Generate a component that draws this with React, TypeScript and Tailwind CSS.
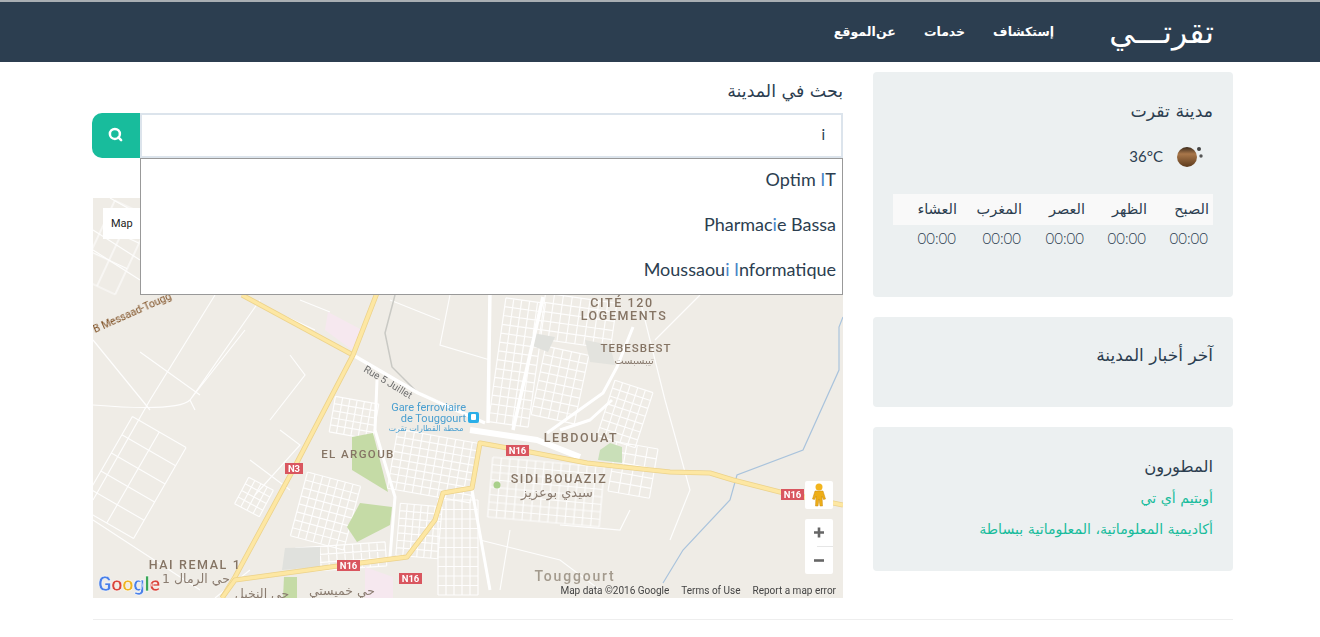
import { Search } from 'lucide-react'

const arabic = 'font-["DejaVu_Sans",sans-serif]'

const prayers = [
  { name: 'الصبح', width: 'w-[62px]' },
  { name: 'الظهر', width: 'w-[62px]' },
  { name: 'العصر', width: 'w-[63px]' },
  { name: 'المغرب', width: 'w-[65px]' },
  { name: 'العشاء', width: 'w-[68px]' },
]

function lineGrid(x: number, y: number, w: number, h: number, cols: number, rows: number, angle: number) {
  const lines = []
  for (let i = 0; i <= cols; i++) {
    const px = x + (w / cols) * i
    lines.push(`M${px} ${y}V${y + h}`)
  }
  for (let i = 0; i <= rows; i++) {
    const py = y + (h / rows) * i
    lines.push(`M${x} ${py}H${x + w}`)
  }
  return <path d={lines.join('')} transform={`rotate(${angle} ${x + w / 2} ${y + h / 2})`} />
}

function RoadShield({ x, y, label, w = 23 }: { x: number; y: number; label: string; w?: number }) {
  return (
    <g>
      <rect x={x} y={y} width={w} height={11} fill="#d9565f" />
      <text x={x + w / 2} y={y + 9} textAnchor="middle" fontSize="9.5" fontWeight="700" fill="#fff" fontFamily="Roboto, sans-serif">
        {label}
      </text>
    </g>
  )
}

function MapLabel({ x, y, children, size = 12.5, spacing = 1.6, color = '#857464' }: { x: number; y: number; children: string; size?: number; spacing?: number; color?: string }) {
  return (
    <text x={x} y={y} textAnchor="middle" fontSize={size} letterSpacing={spacing} fontWeight="500" fill={color} fontFamily="Roboto, sans-serif">
      {children}
    </text>
  )
}

function ArabicLabel({ x, y, children, size = 12, color = '#8a7c70' }: { x: number; y: number; children: string; size?: number; color?: string }) {
  return (
    <text x={x} y={y} textAnchor="middle" fontSize={size} fill={color} fontFamily="DejaVu Sans, sans-serif">
      {children}
    </text>
  )
}

const n16 = 'M222 598L235 580L345 565L407 557L435 520L443 493L472 488L480 443L530 452L587 463L670 472L710 473L733 480L780 492L843 505'
const n3 = 'M382 280L353 355L293 470L235 577L222 598'

function MapDrawing() {
  return (
    <svg viewBox="93 198 750 400" className="block h-full w-full">
      <rect x="93" y="198" width="750" height="400" fill="#efece6" />

      {/* thin streets */}
      <g stroke="#fff" strokeWidth="1.2" fill="none" opacity="0.9">
        {lineGrid(102, 425, 62, 105, 2, 5, 30)}
        {lineGrid(95, 205, 40, 85, 2, 3, 25)}
        {lineGrid(240, 482, 28, 30, 4, 4, 28)}
        {lineGrid(298, 478, 55, 66, 7, 8, 15)}
        {lineGrid(296, 545, 90, 24, 11, 3, -4)}
        {lineGrid(332, 400, 44, 36, 6, 5, 10)}
        {lineGrid(392, 436, 84, 60, 10, 8, 10)}
        {lineGrid(398, 505, 42, 52, 6, 7, 5)}
        {lineGrid(438, 500, 40, 95, 5, 10, 0)}
        {lineGrid(490, 462, 112, 60, 13, 8, 5)}
        {lineGrid(497, 300, 40, 125, 5, 14, 8)}
        {lineGrid(542, 298, 72, 46, 8, 5, 8)}
        {lineGrid(538, 350, 44, 70, 5, 8, 12)}
        {lineGrid(605, 385, 40, 58, 5, 7, 18)}
        {lineGrid(612, 445, 42, 50, 4, 5, 10)}
        <path d="M93 405C130 408 180 410 190 400L260 300M93 340L150 410M140 352L200 395M245 330L190 400L195 410M93 520L200 590M250 570L215 598" />
        <path d="M215 295L150 400L93 500M290 355L305 375L270 420M280 430L300 445L255 495M250 460L290 490M315 330L250 300M300 300L330 312" />
        <path d="M640 300L665 400L690 490L670 540M700 295L655 340M480 540L560 560L600 590M390 300L440 320M450 295L440 345L490 360" />
        <path d="M630 510L620 530L560 525M500 590L510 530M93 250L140 280M110 198L140 215M93 230L140 260" />
      </g>

      {/* parks and blocks */}
      <path d="M352 437L373 433L388 492L352 470Z" fill="#c5dba6" />
      <path d="M360 503L392 507L390 525L357 542L347 527Z" fill="#c5dba6" />
      <path d="M600 450L610 443L622 447L622 463L598 460Z" fill="#c9dfb8" />
      <path d="M284 577H297V598H283Z" fill="#c5dba6" />
      <circle cx="497" cy="485" r="3.500" fill="#a9d08a" />
      <path d="M328 312L362 330L352 350L325 330Z" fill="#f6e8ef" />
      <path d="M365 567L393 577V598H365Z" fill="#f6e8ef" />
      <path d="M285 548L320 547V567L282 570Z" fill="#e0e1dd" />
      <path d="M533 333L555 337L548 352L530 345Z" fill="#e0e1dd" />
      <path d="M585 340L610 345L615 365L590 362Z" fill="#e3e3de" />

      {/* railway */}
      <path d="M395 295L385 333L392 367L418 393L452 407" stroke="#c9c9c4" strokeWidth="1.500" fill="none" />

      {/* wide white roads */}
      <g stroke="#fff" fill="none" strokeLinejoin="round">
        <path d="M353 355L418 393L485 423" strokeWidth="3.500" />
        <path d="M377 380L375 430L395 497L390 557" strokeWidth="3" />
        <path d="M470 430L537 440L580 457" strokeWidth="6" />
        <path d="M547 433L603 393L617 367L633 327" strokeWidth="3" />
        <path d="M490 290L488 423M543 297L513 430" strokeWidth="3.500" />
        <path d="M472 490L490 590" strokeWidth="3" />
        <path d="M612 400L590 420L560 430" strokeWidth="3" />
      </g>

      {/* river */}
      <path d="M843 317L839 327L839 370L803 450L737 475L730 500L683 550L663 583" stroke="#a9c3dc" strokeWidth="1.200" fill="none" />

      {/* highways */}
      <g fill="none" strokeLinejoin="round">
        <path d="M242 295L353 355" stroke="#ecd28a" strokeWidth="5" />
        <path d="M242 295L353 355" stroke="#fde7a3" strokeWidth="3.500" />
        <path d={n3} stroke="#ecd28a" strokeWidth="5" />
        <path d={n3} stroke="#fde7a3" strokeWidth="3.500" />
        <path d={n16} stroke="#ecd28a" strokeWidth="5" />
        <path d={n16} stroke="#fde7a3" strokeWidth="3.500" />
      </g>

      <RoadShield x={285} y={463} label="N3" w={18} />
      <RoadShield x={337} y={560} label="N16" />
      <RoadShield x={399} y={573} label="N16" />
      <RoadShield x={506} y={445} label="N16" />
      <RoadShield x={781} y={489} label="N16" />

      <MapLabel x={622} y={307}>CITÉ 120</MapLabel>
      <MapLabel x={624} y={320}>LOGEMENTS</MapLabel>
      <MapLabel x={636} y={352} size={11.5} spacing={1}>TEBESBEST</MapLabel>
      <ArabicLabel x={634} y={364} size={10}>تيبسبست</ArabicLabel>
      <MapLabel x={581} y={442}>LEBDOUAT</MapLabel>
      <MapLabel x={358} y={458} size={11.5} spacing={1.4}>EL ARGOUB</MapLabel>
      <MapLabel x={559} y={483}>SIDI BOUAZIZ</MapLabel>
      <ArabicLabel x={557} y={497} size={13}>سيدي بوعزيز</ArabicLabel>
      <MapLabel x={195} y={569}>HAI REMAL 1</MapLabel>
      <ArabicLabel x={196} y={583} size={12.500}>حي الرمال 1</ArabicLabel>
      <ArabicLabel x={262} y={598} size={12.500}>حي النخيل</ArabicLabel>
      <ArabicLabel x={342} y={595} size={12.500}>حي خميستي</ArabicLabel>
      <MapLabel x={575} y={581} size={14} spacing={1.800} color="#a39a8d">Touggourt</MapLabel>

      <g fill="#4a9fd0" fontFamily="Roboto, sans-serif" fontSize="11">
        <text x={466} y={411} textAnchor="end">Gare ferroviaire</text>
        <text x={466} y={422} textAnchor="end">de Touggourt</text>
      </g>
      <rect x="468" y="412" width="11" height="11" rx="2" fill="#29aee8" />
      <rect x="471" y="414" width="5" height="6" rx="1" fill="#fff" />
      <ArabicLabel x={426} y={431} size={8} color="#4a9fd0">محطة القطارات تقرت</ArabicLabel>

      <text x={95} y={333} transform="rotate(-24 95 333)" fontSize="10.500" fill="#7b4b1e" fontFamily="Roboto, sans-serif">
        B Messaad-Tougg
      </text>
      <text x={363} y={371} transform="rotate(31 363 371)" fontSize="10" fill="#6d6d6d" fontFamily="Roboto, sans-serif">
        Rue 5 Juillet
      </text>

      {/* google logo */}
      <text x={98} y={591} fontSize="20" fontWeight="700" fontFamily="Roboto, sans-serif" stroke="#fff" strokeWidth="0.500" letterSpacing="-0.300">
        <tspan fill="#4a80e8">G</tspan>
        <tspan fill="#d9443a">o</tspan>
        <tspan fill="#eeb422">o</tspan>
        <tspan fill="#4a80e8">g</tspan>
        <tspan fill="#3ba757">l</tspan>
        <tspan fill="#d9443a">e</tspan>
      </text>
    </svg>
  )
}

function GoogleMap() {
  return (
    <div className="relative mt-[40px] h-[400px] w-[750px] overflow-hidden">
      <MapDrawing />
      <div className="absolute left-[10px] top-[10px] flex h-[31px] w-[60px] items-center bg-white pl-[8px] pt-px font-['Roboto',sans-serif] text-[11px] text-[#222]">
        Map
      </div>
      <div className="absolute left-[712px] top-[283px] flex h-[28px] w-[28px] items-center justify-center rounded-[2px] bg-white">
        <svg width="14" height="24" viewBox="0 0 14 24">
          <circle cx="7" cy="4" r="3.500" fill="#f2b51e" />
          <path d="M3 8h8l2.500 8-2 .5L10 13l.5 10H8l-1-7-1 7H3.500L4 13l-1.500 3.500-2-.5z" fill="#eeae17" stroke="#c88a10" strokeWidth="0.500" />
        </svg>
      </div>
      <div className="absolute left-[712px] top-[321px] flex w-[28px] flex-col items-center rounded-[2px] bg-white text-[#666]">
        <svg width="28" height="27" viewBox="0 0 28 27">
          <path d="M14 8.500v10M9 13.500h10" stroke="#666" strokeWidth="2.600" />
        </svg>
        <div className="ml-auto h-px w-[16px] bg-[#e6e6e6]" />
        <svg width="28" height="27" viewBox="0 0 28 27">
          <path d="M9 13.500h10" stroke="#666" strokeWidth="2.600" />
        </svg>
      </div>
      <div className="absolute bottom-px right-[7px] flex gap-[12px] font-['Roboto',sans-serif] text-[10px] leading-[12px] text-[#444]">
        <span>Map data ©2016 Google</span>
        <span>Terms of Use</span>
        <span>Report a map error</span>
      </div>
    </div>
  )
}

function SearchColumn() {
  return (
    <div className="relative w-[750px]">
      <h2 dir="rtl" className={`${arabic} pt-[18px] text-[17.400px] leading-[22px] text-[#2c3e50]`}>
        بحث في المدينة
      </h2>
      <div className="-ml-px mt-[11px] flex h-[45px] w-[751px]">
        <button className="flex h-full w-[48px] items-center justify-center rounded-l-[10px] bg-[#18bc9c] pb-[2px] pr-px text-white">
          <Search size={15} strokeWidth={4} />
        </button>
        <div className="flex h-full w-[703px] items-center justify-end border-2 border-[#dce4ec] bg-white pb-[2px] pr-[16px] font-['Lato',sans-serif] text-[15px] text-[#2c3e50]">
          i
        </div>
      </div>
      <ul className="absolute left-[47px] top-[96px] z-10 h-[137px] w-[703px] border border-[#999] bg-white px-[6px] text-right font-['Lato',sans-serif] text-[18px] leading-[41px] text-[#2c3e50]">
        <li className="h-[45px]">
          Opt<b className="font-normal text-[#4a86c8]">i</b>m <b className="font-normal text-[#4a86c8]">I</b>T
        </li>
        <li className="h-[45px]">
          Pharmac<b className="font-normal text-[#4a86c8]">i</b>e Bassa
        </li>
        <li className="h-[45px]">
          Moussaou<b className="font-normal text-[#4a86c8]">i</b> <b className="font-normal text-[#4a86c8]">I</b>nformat<b className="font-normal text-[#4a86c8]">i</b>que
        </li>
      </ul>
      <GoogleMap />
    </div>
  )
}

function WeatherCard() {
  return (
    <section dir="rtl" className="h-[225px] rounded-[4px] bg-[#ecf0f1] px-[20px] pt-[28px]">
      <h3 className={`${arabic} text-[17.300px] leading-[22px] text-[#2c3e50]`}>مدينة تقرت</h3>
      <div className="mt-[21px] flex h-[26px] items-center">
        <svg width="30" height="24" viewBox="0 0 30 24" className="mr-[8px] shrink-0">
          <defs>
            <linearGradient id="moon" x1="0" y1="0" x2="0" y2="1">
              <stop offset="0" stopColor="#3b2a1c" />
              <stop offset="0.350" stopColor="#a9774a" />
              <stop offset="1" stopColor="#5c3a1c" />
            </linearGradient>
          </defs>
          <circle cx="12" cy="13" r="10" fill="url(#moon)" />
          <circle cx="24" cy="5" r="2" fill="#444" />
          <circle cx="26" cy="12" r="1.700" fill="#555" />
        </svg>
        <span dir="ltr" className="mr-[12px] font-['Lato',sans-serif] text-[15px] text-[#2c3e50]">
          36°C
        </span>
      </div>
      <table className="mt-[25px] w-[320px] table-fixed border-collapse text-[#2c3e50]">
        <tbody>
          <tr className="h-[31px] bg-[#f9f9f9]">
            {prayers.map((p) => (
              <td key={p.name} className={`${p.width} ${arabic} pr-[4px] text-[14.500px]`}>
                {p.name}
              </td>
            ))}
          </tr>
          <tr className="h-[27px]">
            {prayers.map((p) => (
              <td key={p.name} className="pr-[5px] font-['Lato',sans-serif] text-[15px] font-light">
                00:00
              </td>
            ))}
          </tr>
        </tbody>
      </table>
    </section>
  )
}

function Sidebar() {
  return (
    <aside className="flex w-[360px] flex-col gap-[20px] pt-[10px]">
      <WeatherCard />
      <section dir="rtl" className="h-[90px] rounded-[4px] bg-[#ecf0f1] px-[20px] pt-[26px]">
        <h3 className={`${arabic} text-[17px] leading-[24px] text-[#2c3e50]`}>آخر أخبار المدينة</h3>
      </section>
      <section dir="rtl" className="h-[144px] rounded-[4px] bg-[#ecf0f1] px-[20px] pt-[28px]">
        <h3 className={`${arabic} text-[16.400px] leading-[24px] text-[#2c3e50]`}>المطورون</h3>
        <a className={`${arabic} mt-[9px] block text-[14.200px] leading-[20px] text-[#18bc9c]`}>أوبتيم أي تي</a>
        <a className={`${arabic} mt-[11px] block text-[14.200px] leading-[20px] text-[#18bc9c]`}>أكاديمية المعلوماتية، المعلوماتية ببساطة</a>
      </section>
    </aside>
  )
}

export default function App() {
  return (
    <div className="h-[637px] w-[1320px] overflow-hidden bg-white">
      <header dir="rtl" className={`${arabic} flex h-[62px] items-center border-t-2 border-[#a9aeb3] bg-[#2c3e50] pr-[106px] text-white`}>
        <span className="w-[104px] whitespace-nowrap text-[31.500px] leading-[60px]">تقرتـــي</span>
        <nav className="mr-[56px] flex gap-[28px] text-[12.500px] font-bold">
          <a>إستكشاف</a>
          <a>خدمات</a>
          <a className="[word-spacing:-4px]">عن الموقع</a>
        </nav>
      </header>
      <main className="ml-[93px] flex w-[1140px] gap-[30px]">
        <SearchColumn />
        <Sidebar />
      </main>
      <div className="ml-[93px] mt-[21px] h-px w-[1140px] bg-[#eeeeee]" />
    </div>
  )
}
